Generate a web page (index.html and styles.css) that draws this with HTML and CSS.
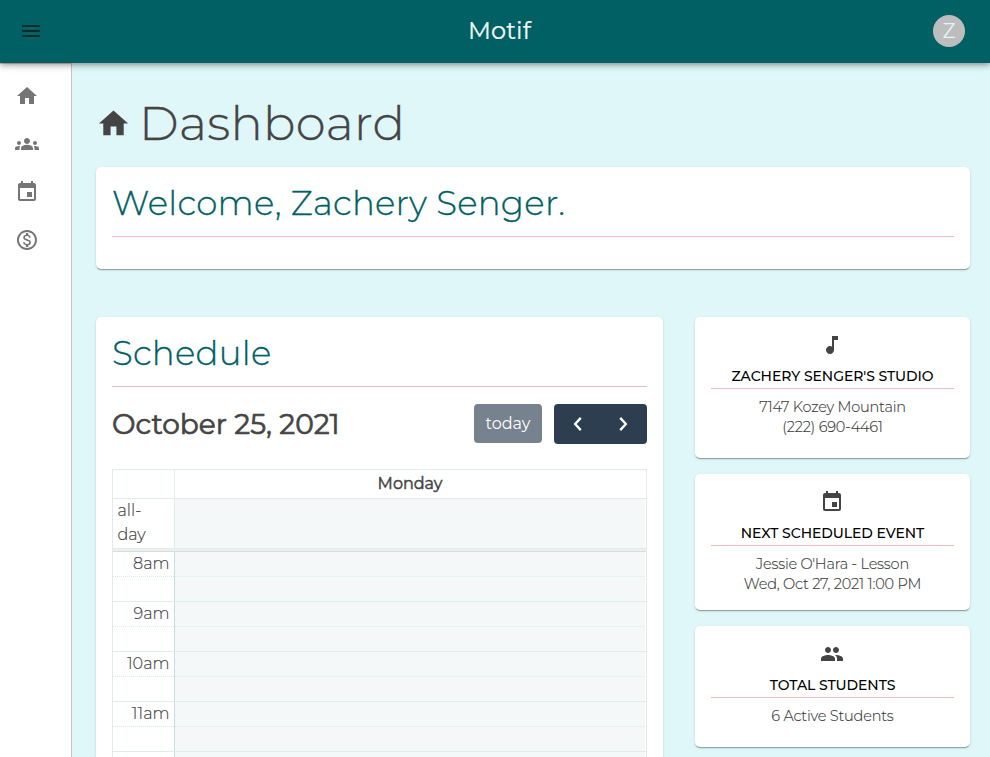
FILE: index.html
```
<!DOCTYPE html>
<html lang="en">
<head>
<meta charset="utf-8">
<title>Motif</title>
<link rel="stylesheet" href="styles.css">
</head>
<body>
<header class="topbar">
  <svg class="menu" viewBox="0 0 24 24"><path d="M3 18h18v-2H3v2zm0-5h18v-2H3v2zm0-7v2h18V6H3z"/></svg>
  <span class="brand">Motif</span>
  <span class="avatar">Z</span>
</header>
<div class="shell">
  <nav class="sidebar">
    <svg viewBox="0 0 24 24"><path d="M10 20v-6h4v6h5v-8h3L12 3 2 12h3v8z"/></svg>
    <svg viewBox="0 0 24 24"><path d="M12 12.75c1.63 0 3.07.39 4.24.9 1.08.48 1.76 1.56 1.76 2.73V18H6v-1.61c0-1.18.68-2.26 1.76-2.73 1.17-.52 2.61-.91 4.24-.91zM4 13c1.1 0 2-.9 2-2s-.9-2-2-2-2 .9-2 2 .9 2 2 2zm1.13 1.1C4.76 14.04 4.39 14 4 14c-.99 0-1.93.21-2.78.58C.48 14.9 0 15.62 0 16.43V18h4.5v-1.61c0-.83.23-1.61.63-2.29zM20 13c1.1 0 2-.9 2-2s-.9-2-2-2-2 .9-2 2 .9 2 2 2zm4 3.43c0-.81-.48-1.53-1.22-1.85C21.93 14.21 20.99 14 20 14c-.39 0-.76.04-1.13.1.4.68.63 1.46.63 2.29V18H24v-1.57zM12 6c1.66 0 3 1.34 3 3s-1.34 3-3 3-3-1.34-3-3 1.34-3 3-3z"/></svg>
    <svg viewBox="0 0 24 24"><path d="M17 12h-5v5h5v-5zM16 1v2H8V1H6v2H5c-1.110 0-1.990.9-1.990 2L3 19c0 1.100.89 2 2 2h14c1.100 0 2-.9 2-2V5c0-1.100-.9-2-2-2h-1V1h-2zm3 18H5V8h14v11z"/></svg>
    <svg viewBox="0 0 24 24"><path d="M12 2C6.480 2 2 6.480 2 12s4.480 10 10 10 10-4.480 10-10S17.520 2 12 2zm0 18c-4.410 0-8-3.590-8-8s3.590-8 8-8 8 3.590 8 8-3.590 8-8 8zm.31-8.860c-1.770-.45-2.340-.94-2.340-1.670 0-.84.79-1.430 2.100-1.430 1.380 0 1.900.66 1.940 1.640h1.710c-.05-1.340-.87-2.570-2.490-2.970V5H10.900v1.690c-1.510.32-2.720 1.300-2.720 2.810 0 1.790 1.490 2.690 3.660 3.210 1.950.46 2.340 1.150 2.340 1.870 0 .53-.39 1.390-2.100 1.390-1.600 0-2.230-.72-2.320-1.640H8.040c.1 1.700 1.360 2.660 2.860 2.970V19h2.340v-1.670c1.520-.29 2.720-1.160 2.730-2.770-.01-2.200-1.900-2.960-3.660-3.420z"/></svg>
  </nav>
  <main class="content">
    <h1 class="title"><svg viewBox="0 0 24 24"><path d="M10 20v-6h4v6h5v-8h3L12 3 2 12h3v8z"/></svg><span>Dashboard</span></h1>
    <section class="card welcome"><h2>Welcome, Zachery Senger.</h2></section>
    <div class="columns">
      <section class="card schedule">
        <h2>Schedule</h2>
        <div class="toolbar">
          <h3>October 25, 2021</h3>
          <button class="today">today</button>
          <div class="arrows">
            <svg viewBox="0 0 16 16"><path d="M11.500 1.500 5.500 8l6 6.500"/></svg>
            <svg viewBox="0 0 16 16"><path d="m4.500 1.500 6 6.500-6 6.500"/></svg>
          </div>
        </div>
        <div class="calendar">
          <div class="row head"><div class="axis"></div><div class="day"><span>Monday</span></div></div>
          <div class="row allday"><div class="axis"><span>all-<br>day</span></div><div class="day"></div></div>
          <div class="divider"></div>
          <div class="slots">
            <div class="row slot"><div class="axis"><span>8am</span></div><div class="day"></div></div>
            <div class="row slot"><div class="axis"><span>9am</span></div><div class="day"></div></div>
            <div class="row slot"><div class="axis"><span>10am</span></div><div class="day"></div></div>
            <div class="row slot"><div class="axis"><span>11am</span></div><div class="day"></div></div>
            <div class="row last"><div class="axis"></div><div class="day"></div></div>
          </div>
        </div>
      </section>
      <aside class="side">
        <section class="card info studio">
          <svg viewBox="0 0 24 24"><path d="M12 3v10.550c-.59-.34-1.270-.55-2-.55-2.210 0-4 1.790-4 4s1.790 4 4 4 4-1.790 4-4V7h4V3h-6z"/></svg>
          <h4>ZACHERY SENGER'S STUDIO</h4>
          <p>7147 Kozey Mountain</p><p>(222) 690-4461</p>
        </section>
        <section class="card info event">
          <svg viewBox="0 0 24 24"><path d="M17 12h-5v5h5v-5zM16 1v2H8V1H6v2H5c-1.110 0-1.990.9-1.990 2L3 19c0 1.100.89 2 2 2h14c1.100 0 2-.9 2-2V5c0-1.100-.9-2-2-2h-1V1h-2zm3 18H5V8h14v11z"/></svg>
          <h4>NEXT SCHEDULED EVENT</h4>
          <p>Jessie O'Hara - Lesson</p><p>Wed, Oct 27, 2021 1:00 PM</p>
        </section>
        <section class="card info students">
          <svg viewBox="0 0 24 24"><path d="M16 11c1.660 0 2.990-1.340 2.990-3S17.660 5 16 5c-1.660 0-3 1.340-3 3s1.340 3 3 3zm-8 0c1.660 0 2.990-1.340 2.990-3S9.660 5 8 5C6.340 5 5 6.340 5 8s1.340 3 3 3zm0 2c-2.330 0-7 1.170-7 3.500V19h14v-2.500c0-2.330-4.670-3.500-7-3.500zm8 0c-.29 0-.62.02-.97.05 1.160.84 1.970 1.970 1.970 3.450V19h6v-2.500c0-2.330-4.670-3.500-7-3.500z"/></svg>
          <h4>TOTAL STUDENTS</h4>
          <p>6 Active Students</p>
        </section>
      </aside>
    </div>
  </main>
</div>
</body>
</html>
```
FILE: styles.css
```
* { box-sizing: border-box; }
body { margin: 0; height: 757px; overflow: hidden; background: #e0f7fa; color: #444; font-family: Montserrat, Inter, sans-serif; font-weight: 300; display: flex; flex-direction: column; }
h1, h2, h3, h4, p { margin: 0; font-weight: 300; white-space: nowrap; }
svg { display: block; fill: currentColor; }
.topbar { height: 63px; flex: none; background: #006064; display: grid; grid-template-columns: 1fr auto 1fr; align-items: center; padding: 0 25px 2px 19px; position: relative; z-index: 2; box-shadow: 0 2px 4px -1px rgba(0,0,0,.2), 0 4px 5px rgba(0,0,0,.14), 0 1px 10px rgba(0,0,0,.12); }
.menu { width: 24px; height: 24px; color: #002b2d; }
.brand { color: #f4fbfb; font-size: 24px; font-weight: 400; margin-left: 15px; letter-spacing: .1px; -webkit-text-stroke: .2px currentColor; }
.avatar { justify-self: end; width: 32px; height: 32px; border-radius: 50%; background: #bdbdbd; color: #e0f7fa; font-size: 20px; font-weight: 400; display: flex; align-items: center; justify-content: center; }
.shell { display: flex; flex: 1; min-height: 0; }
.sidebar { width: 72px; flex: none; background: #fff; border-top: 1px solid #e8bebe; border-right: 1px solid #dcbcbc; padding: 20px 0 0 15px; display: flex; flex-direction: column; gap: 24px; color: #757575; }
.sidebar svg { width: 24px; height: 24px; flex: none; }
.content { flex: 1; padding: 24px 20px 0 24px; min-width: 0; }
.title { height: 72px; display: flex; align-items: center; gap: 8px; font-size: 48px; line-height: 72px; letter-spacing: .3px; -webkit-text-stroke: .3px currentColor; }
.title svg { width: 35px; height: 35px; }
.card { background: #fff; border-radius: 5px; padding: 16px; box-shadow: 0 2px 1px -1px rgba(0,0,0,.2), 0 1px 1px rgba(0,0,0,.14), 0 1px 3px rgba(0,0,0,.12); }
.welcome { height: 102px; margin-top: 8px; }
.card h2 { height: 54px; border-bottom: 1px solid #e8bebe; color: #006064; font-size: 34px; line-height: 41px; letter-spacing: .27px; -webkit-text-stroke: .3px currentColor; }
.columns { margin-top: 48px; display: flex; gap: 32px; align-items: flex-start; }
.schedule { width: 567px; height: 440px; padding-bottom: 0; border-radius: 5px 5px 0 0; }
.toolbar { display: flex; align-items: center; height: 40px; margin-top: 17px; }
.toolbar h3 { flex: 1; font-size: 28px; font-weight: 400; line-height: 40px; -webkit-text-stroke: .7px currentColor; }
.today { width: 68px; height: 39px; align-self: flex-start; border: 0; padding: 0; border-radius: 4px; background: #76828d; color: #fff; font: 400 16px Montserrat, Inter, sans-serif; }
.arrows { margin-left: 12px; width: 93px; height: 40px; border-radius: 4px; background: #2c3e50; display: flex; align-items: center; justify-content: space-between; padding: 0 16px; }
.arrows svg { width: 15px; height: 16px; fill: none; stroke: #fff; stroke-width: 2.5; }
.calendar { margin-top: 25px; height: 288px; border: 1px solid #e0ecec; border-bottom: 0; }
.row { display: flex; }
.axis { width: 62px; flex: none; border-right: 1px solid #e0ecec; }
.day { flex: 1; margin-right: 1px; background: #f4f8f9; }
.head { height: 29px; border-bottom: 1px solid #e0ecec; }
.head .day { background: #fff; text-align: center; font-size: 16px; line-height: 27px; font-weight: 400; -webkit-text-stroke: .5px currentColor; }
.allday { height: 49px; font-size: 16px; line-height: 24px; }
.axis span { -webkit-text-stroke: .15px currentColor; }
.allday .axis { padding-left: 4.5px; }
.divider { height: 4px; background: #eef0f0; border-top: 1px solid #e0ecec; border-bottom: 1px solid #d5dddd; }
.slot { height: 50px; border-bottom: 1px solid #e0ecec; background: linear-gradient(#f4f8f9, #f4f8f9) 62px 0 / 470px 100% no-repeat; }
.slot .axis, .last .axis { border-color: #c2dede; }
.slot .axis { font-size: 16px; line-height: 24px; text-align: right; padding-right: 4.5px; }
.slot .day { background: none; }
.slot > div::after { content: ""; display: block; border-bottom: 1px dotted #dbeaea; }
.slot .axis::after { margin-right: -4.5px; }
.slot .day::after { margin-top: 24px; }
.last { height: 5px; }
.side { width: 275px; display: flex; flex-direction: column; gap: 16px; }
.info { text-align: center; }
.studio { height: 141px; }
.event { height: 136px; }
.students { height: 121px; }
.info svg { width: 24px; height: 24px; margin: 0 auto 0 109px; }
.info h4 { margin: 8px 0; height: 24px; border-bottom: 1px solid #e8bebe; color: #000; font-size: 14px; font-weight: 500; line-height: 23px; letter-spacing: -.06px; }
.info p { font-size: 14.5px; line-height: 20px; letter-spacing: -.18px; color: #3a3a3a; -webkit-text-stroke: .15px currentColor; }
```
